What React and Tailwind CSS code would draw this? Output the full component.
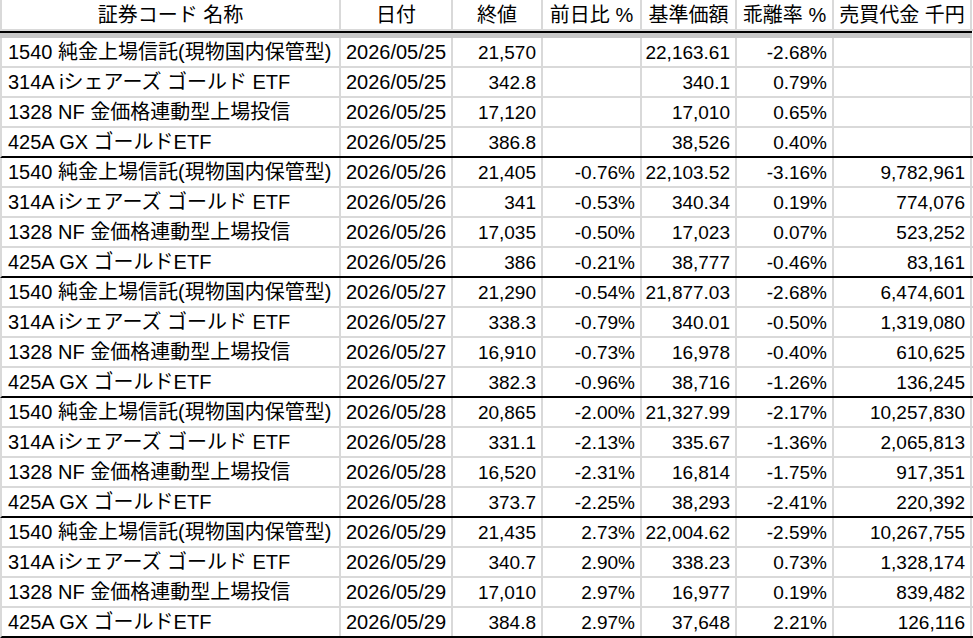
import React from "react";

const cols = [
  "w-[339px]",
  "w-[112px]",
  "w-[90px]",
  "w-[99px]",
  "w-[95px]",
  "w-[97px]",
  "w-[138px]",
];

const names = [
  "1540 純金上場信託(現物国内保管型)",
  "314A iシェアーズ ゴールド ETF",
  "1328 NF 金価格連動型上場投信",
  "425A GX ゴールドETF",
];

const groups = [
  {
    date: "2026/05/25",
    rows: [
      ["21,570", "", "22,163.61", "-2.68%", ""],
      ["342.8", "", "340.1", "0.79%", ""],
      ["17,120", "", "17,010", "0.65%", ""],
      ["386.8", "", "38,526", "0.40%", ""],
    ],
  },
  {
    date: "2026/05/26",
    rows: [
      ["21,405", "-0.76%", "22,103.52", "-3.16%", "9,782,961"],
      ["341", "-0.53%", "340.34", "0.19%", "774,076"],
      ["17,035", "-0.50%", "17,023", "0.07%", "523,252"],
      ["386", "-0.21%", "38,777", "-0.46%", "83,161"],
    ],
  },
  {
    date: "2026/05/27",
    rows: [
      ["21,290", "-0.54%", "21,877.03", "-2.68%", "6,474,601"],
      ["338.3", "-0.79%", "340.01", "-0.50%", "1,319,080"],
      ["16,910", "-0.73%", "16,978", "-0.40%", "610,625"],
      ["382.3", "-0.96%", "38,716", "-1.26%", "136,245"],
    ],
  },
  {
    date: "2026/05/28",
    rows: [
      ["20,865", "-2.00%", "21,327.99", "-2.17%", "10,257,830"],
      ["331.1", "-2.13%", "335.67", "-1.36%", "2,065,813"],
      ["16,520", "-2.31%", "16,814", "-1.75%", "917,351"],
      ["373.7", "-2.25%", "38,293", "-2.41%", "220,392"],
    ],
  },
  {
    date: "2026/05/29",
    rows: [
      ["21,435", "2.73%", "22,004.62", "-2.59%", "10,267,755"],
      ["340.7", "2.90%", "338.23", "0.73%", "1,328,174"],
      ["17,010", "2.97%", "16,977", "0.19%", "839,482"],
      ["384.8", "2.97%", "37,648", "2.21%", "126,116"],
    ],
  },
];

const headers = [
  "証券コード 名称",
  "日付",
  "終値",
  "前日比 %",
  "基準価額",
  "乖離率 %",
  "売買代金 千円",
];

function Row({ name, date, vals, last }) {
  const cells = [name, date, ...vals];
  return (
    <div
      className={`flex h-[30px] border-l-2 border-[#d9d9d9] border-b-2 ${
        last ? "border-b-black" : "border-b-[#d9d9d9]"
      }`}
    >
      {cells.map((c, i) => (
        <div
          key={i}
          className={`${cols[i]} shrink-0 h-full border-r-2 border-[#d9d9d9] flex items-center whitespace-nowrap overflow-hidden ${
            i === 0
              ? "justify-start pl-[6px] text-[20px]"
              : i === 1
              ? "justify-center text-[20px]"
              : "justify-end pr-[5px] text-[19px]"
          }`}
        >
          {c}
        </div>
      ))}
    </div>
  );
}

export default function App() {
  return (
    <div
      className="w-[973px] h-[638px] bg-white text-black overflow-hidden text-[20px] leading-none"
      style={{ fontFamily: "'Liberation Sans', 'Noto Sans CJK JP', sans-serif" }}
    >
      <div className="flex h-[31px] border-l-2 border-b-2 border-[#d9d9d9]">
        {headers.map((h, i) => (
          <div
            key={i}
            className={`${cols[i]} shrink-0 h-full border-r-2 border-[#d9d9d9] flex items-center justify-center whitespace-nowrap`}
          >
            {h}
          </div>
        ))}
      </div>
      <div className="h-[2px] bg-black w-[972px]" />
      <div className="h-[5px] bg-[#c8c8c8] w-[972px]" />
      {groups.map((g, gi) =>
        g.rows.map((r, ri) => (
          <Row
            key={`${gi}-${ri}`}
            name={names[ri]}
            date={g.date}
            vals={r}
            last={ri === 3}
          />
        ))
      )}
    </div>
  );
}
